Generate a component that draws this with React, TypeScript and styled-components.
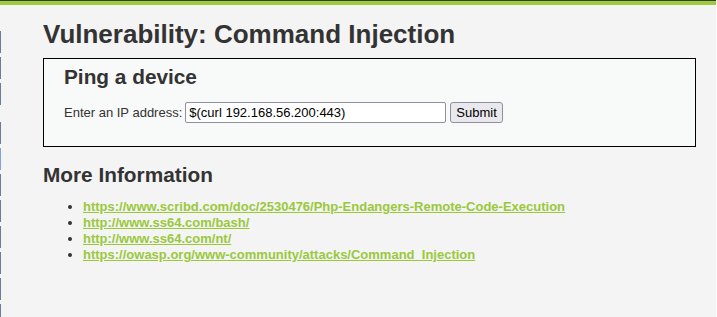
import React from 'react';
import styled, { createGlobalStyle } from 'styled-components';

const GlobalStyle = createGlobalStyle`
  html, body {
    margin: 0;
    padding: 0;
    background: #f4f4f4;
  }
  body {
    font-family: 'Liberation Sans', Arial, sans-serif;
    color: #333;
  }
`;

const Page = styled.div`
  height: 317px;
  border-right: 1px solid #fbfbfb;
  box-sizing: border-box;
  overflow: hidden;
`;

const Header = styled.div`
  height: 4px;
  border-top: 1px solid #3a3a3a;
  background: #9ccb3b;
`;

const Main = styled.div`
  display: flex;
`;

// the left menu is scrolled almost out of view, only a 1px sliver shows
const Sidebar = styled.nav`
  width: 1px;
  flex-shrink: 0;
  overflow: hidden;
  padding-top: 26px;
`;

const MenuBlock = styled.div`
  margin: 0 0 17px;
`;

const MenuItem = styled.div<{ $selected?: boolean }>`
  height: 22px;
  margin-bottom: 4px;
  background: ${(p) => (p.$selected ? '#87a0cb' : '#6d7a98')};
`;

const Content = styled.div`
  flex: 1;
  padding: 0 20px 0 42px;
`;

const Title = styled.h1`
  margin: 14px 0 9px;
  font-size: 26px;
  line-height: 30px;
  font-weight: bold;
  color: #333;
`;

const VulnBox = styled.div`
  border: 1px solid #000;
  background: #f8f9f9;
  padding: 6px 20px 23px;
`;

const BoxTitle = styled.h2`
  margin: 0 0 13px;
  font-size: 20.8px;
  line-height: 24px;
  font-weight: bold;
  color: #333;
`;

const PingForm = styled.form`
  display: flex;
  align-items: center;
  font-size: 13px;
  color: #333;
`;

const Label = styled.label`
  margin-right: 3px;
`;

const IpInput = styled.input`
  box-sizing: border-box;
  width: 261px;
  height: 21px;
  padding: 0 3px;
  border: 1px solid #8f8f9d;
  border-radius: 2px;
  background: #fff;
  font-family: 'Liberation Sans', Arial, sans-serif;
  font-size: 13px;
  color: #000;
  margin-right: 4px;
`;

const SubmitButton = styled.button`
  box-sizing: border-box;
  height: 21px;
  padding: 0 5px;
  border: 1px solid #8f8f9d;
  border-radius: 3px;
  background: #e9e9ed;
  font-family: 'Liberation Sans', Arial, sans-serif;
  font-size: 13px;
  color: #000;
`;

const SectionTitle = styled.h2`
  margin: 16px 0 12px;
  font-size: 20.8px;
  line-height: 24px;
  font-weight: bold;
  color: #333;
`;

const LinkList = styled.ul`
  margin: 0;
  padding-left: 40px;
  font-size: 13px;
  line-height: 16px;
  color: #333;
`;

const Link = styled.a`
  color: #99c93a;
  font-weight: bold;
  text-decoration: underline;
`;

const links = [
  'https://www.scribd.com/doc/2530476/Php-Endangers-Remote-Code-Execution',
  'http://www.ss64.com/bash/',
  'http://www.ss64.com/nt/',
  'https://owasp.org/www-community/attacks/Command_Injection',
];

export default function App() {
  return (
    <Page>
      <GlobalStyle />
      <Header />
      <Main>
        <Sidebar>
          <MenuBlock>
            {[0, 1, 2].map((i) => (
              <MenuItem key={i} />
            ))}
          </MenuBlock>
          <MenuBlock>
            {[0, 1, 2, 3, 4, 5, 6, 7].map((i) => (
              <MenuItem key={i} $selected={i === 1} />
            ))}
          </MenuBlock>
        </Sidebar>
        <Content>
          <Title>Vulnerability: Command Injection</Title>
          <VulnBox>
            <BoxTitle>Ping a device</BoxTitle>
            <PingForm onSubmit={(e) => e.preventDefault()}>
              <Label>Enter an IP address:</Label>
              <IpInput type="text" defaultValue="$(curl 192.168.56.200:443)" />
              <SubmitButton type="submit">Submit</SubmitButton>
            </PingForm>
          </VulnBox>
          <SectionTitle>More Information</SectionTitle>
          <LinkList>
            {links.map((l) => (
              <li key={l}>
                <Link href={l}>{l}</Link>
              </li>
            ))}
          </LinkList>
        </Content>
      </Main>
    </Page>
  );
}
